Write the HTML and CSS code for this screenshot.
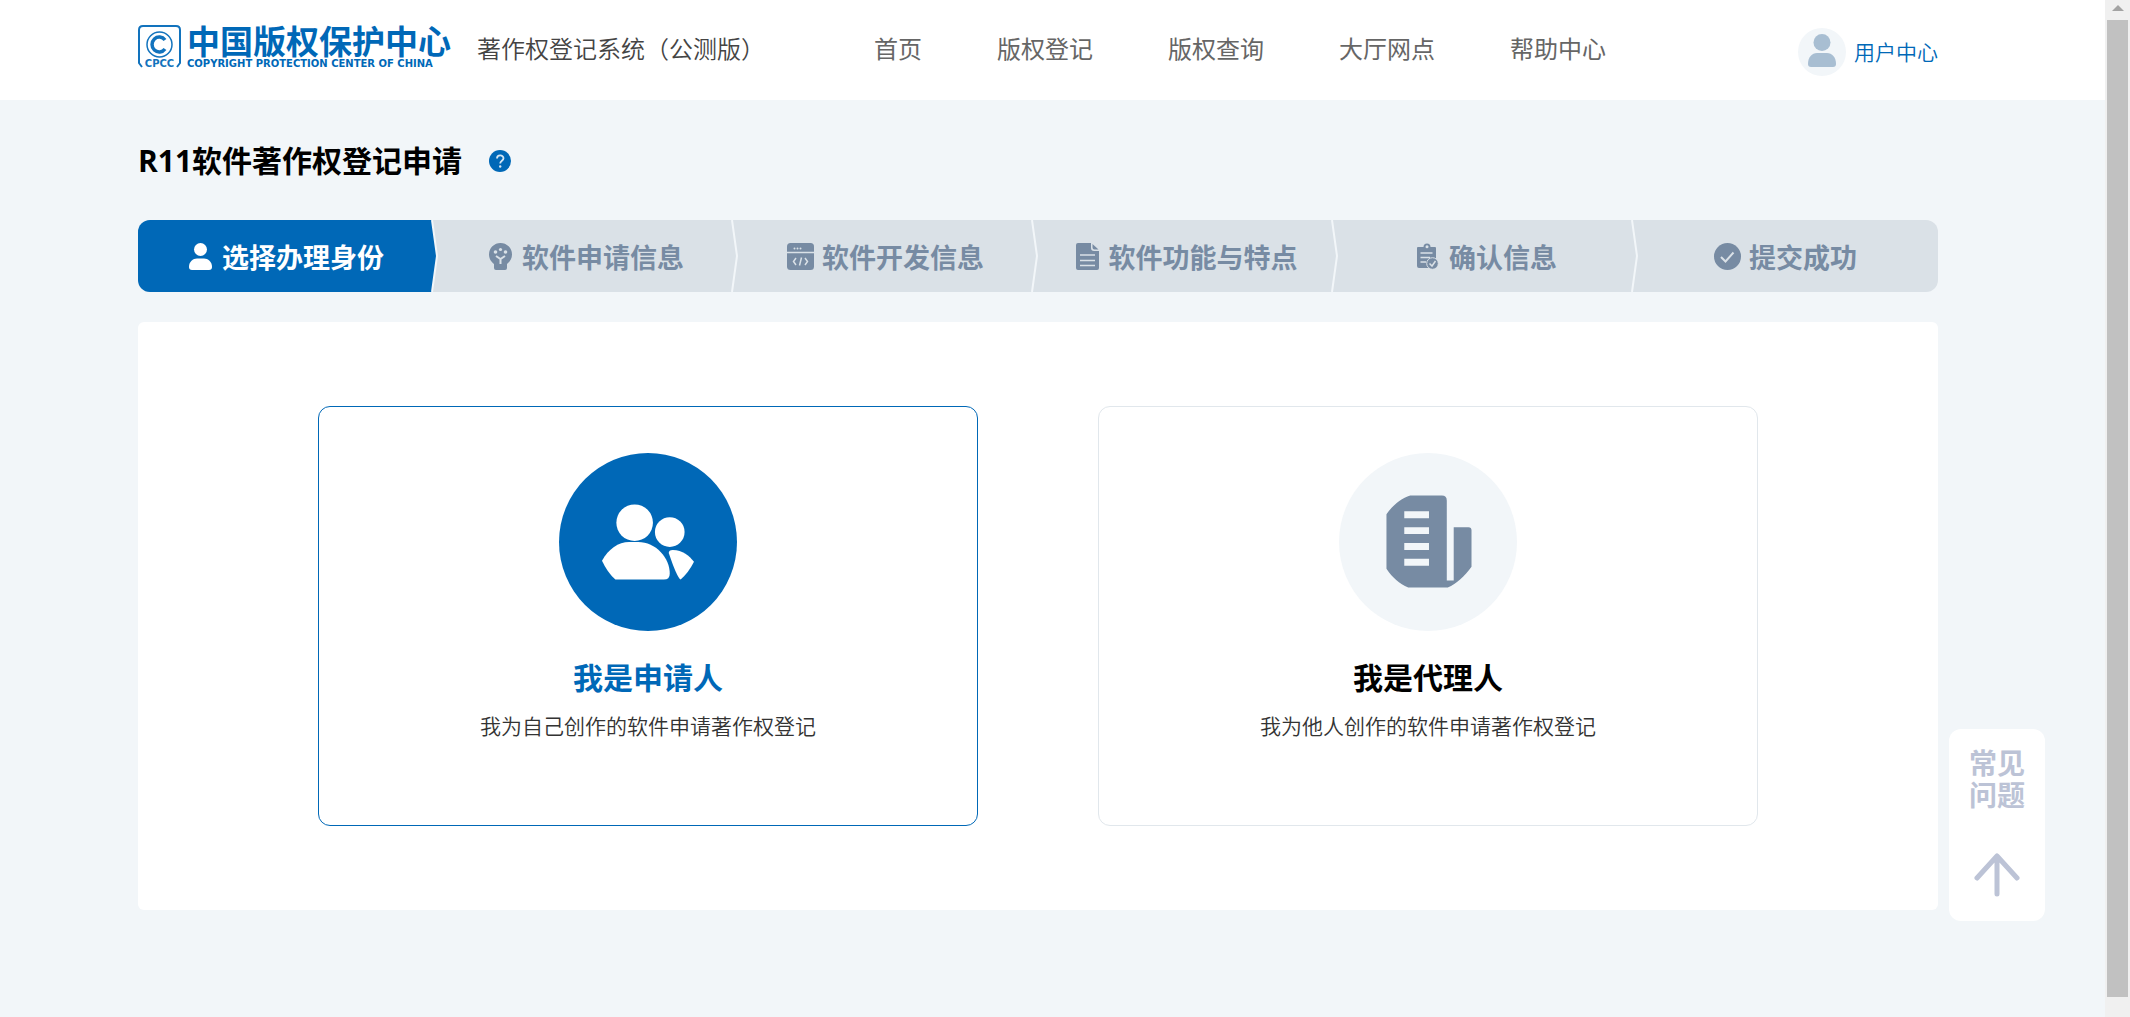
FILE: index.html
```html
<!DOCTYPE html>
<html lang="zh-CN">
<head>
<meta charset="utf-8">
<title>R11软件著作权登记申请</title>
<link rel="stylesheet" href="styles.css">
</head>
<body>
<div class="page">
  <header class="header">
    <div class="wrap header-row">
      <a class="logo" href="#" aria-label="中国版权保护中心">
        <svg class="logo-mark" viewBox="0 0 43 43" aria-hidden="true">
          <path d="M4 42 L1 38 V5 Q1 1 5 1 H38 Q42 1 42 5 V38 L39 42" fill="none" stroke="#1273bd" stroke-width="2"/>
          <circle cx="21.500" cy="19.500" r="12.500" fill="none" stroke="#1273bd" stroke-width="1.500"/>
          <path d="M27 15 A7.200 7.500 0 1 0 27 24" fill="none" stroke="#1273bd" stroke-width="3.500"/>
          <text class="logo-abbr" x="21.500" y="42" text-anchor="middle">CPCC</text>
        </svg>
        <span class="logo-text">
          <span class="logo-cn">中国版权保护中心</span>
          <span class="logo-en">COPYRIGHT PROTECTION CENTER OF CHINA</span>
        </span>
      </a>
      <span class="system-name">著作权登记系统（公测版）</span>
      <nav class="nav">
        <a href="#">首页</a>
        <a href="#">版权登记</a>
        <a href="#">版权查询</a>
        <a href="#">大厅网点</a>
        <a href="#">帮助中心</a>
      </nav>
      <a class="user" href="#">
        <svg class="avatar" viewBox="0 0 48 48" aria-hidden="true">
          <circle cx="24" cy="24" r="24" fill="#f2f6f9"/>
          <circle cx="24" cy="14.500" r="8.500" fill="#a8bed2"/>
          <path d="M10 36 C10 29 14 25 19 25 H29 C34 25 38 29 38 36 Q38 39 35 39 H13 Q10 39 10 36Z" fill="#a8bed2"/>
        </svg>
        用户中心
      </a>
    </div>
  </header>

  <main class="wrap">
    <div class="title-row">
      <h1>R11软件著作权登记申请</h1>
      <button class="help" type="button" aria-label="帮助">
        <svg viewBox="0 0 22 22" aria-hidden="true">
          <circle cx="11" cy="11" r="11" fill="#0068b7"/>
          <path d="M8 8.500 C8 4.500 14.500 4.500 14.500 8.300 C14.500 10.800 11.200 10.800 11.200 13.500" fill="none" stroke="#d5e6f3" stroke-width="1.800"/>
          <circle cx="11.200" cy="16.500" r="1.200" fill="#d5e6f3"/>
        </svg>
      </button>
    </div>

    <ol class="steps">
      <li class="step active">
        <svg class="step-icon" viewBox="0 0 27 27" aria-hidden="true">
          <circle cx="13.500" cy="6.500" r="6.500"/>
          <path d="M2 24 C2 18.500 6 15.500 10 15.500 H17 C21 15.500 25 18.500 25 24 Q25 27 22 27 H5 Q2 27 2 24Z"/>
        </svg>
        选择办理身份
        <svg class="arrow" viewBox="0 0 8 72" aria-hidden="true"><path class="tip" d="M0 0 H1 L6 36 L1 72 H0Z"/><path class="edge" d="M1 0 L6 36 L1 72"/></svg>
      </li>
      <li class="step">
        <svg class="step-icon" viewBox="0 0 27 27" aria-hidden="true">
          <path d="M13.500 0 A11.500 11.500 0 0 1 25 11.500 C25 16 22.500 19 20 21 V25 Q20 27 18 27 H9 Q7 27 7 25 V21 C4.500 19 2 16 2 11.500 A11.500 11.500 0 0 1 13.500 0Z"/>
          <g class="hole"><circle cx="13.500" cy="6.500" r="1.600"/><circle cx="8.500" cy="9" r="1.800"/><circle cx="18.500" cy="9" r="1.800"/></g>
          <path class="line" d="M9 13 L13.500 16 L18 13 M13.500 16 V21"/>
        </svg>
        软件申请信息
        <svg class="arrow" viewBox="0 0 8 72" aria-hidden="true"><path class="edge" d="M1 0 L6 36 L1 72"/></svg>
      </li>
      <li class="step">
        <svg class="step-icon" viewBox="0 0 27 27" aria-hidden="true">
          <rect width="27" height="27" rx="3.500"/>
          <path class="line thin" d="M0 9.500 H27 M9 15 L6.500 18.500 L9 22 M18 15 L20.500 18.500 L18 22 M14.500 14.500 L12.500 22.500"/>
          <g class="hole"><circle cx="7.500" cy="5.500" r="1"/><circle cx="10.500" cy="5.500" r="1"/><circle cx="13.500" cy="5.500" r="1"/></g>
        </svg>
        软件开发信息
        <svg class="arrow" viewBox="0 0 8 72" aria-hidden="true"><path class="edge" d="M1 0 L6 36 L1 72"/></svg>
      </li>
      <li class="step">
        <svg class="step-icon" viewBox="0 0 27 27" aria-hidden="true">
          <path d="M4 0 H17 V5 Q17 8 20 8 H25 V25 Q25 27 23 27 H4 Q2 27 2 25 V2 Q2 0 4 0Z M18.500 1 L24.500 6.500 H20.500 Q18.500 6.500 18.500 4.500Z"/>
          <path class="line thin" d="M6 12 H21 M6 17.500 H21 M6 22.500 H21"/>
        </svg>
        软件功能与特点
        <svg class="arrow" viewBox="0 0 8 72" aria-hidden="true"><path class="edge" d="M1 0 L6 36 L1 72"/></svg>
      </li>
      <li class="step">
        <svg class="step-icon" viewBox="0 0 27 27" aria-hidden="true">
          <path d="M4 4 H9.500 A3.500 3.500 0 0 1 16.500 4 H21 Q22 4 22 5 V25 H5 Q3 25 3 23 V5 Q3 4 4 4Z"/>
          <circle class="hole" cx="13" cy="3.800" r="1.500"/>
          <path class="line thin" d="M6.500 10 H18.500 M6.500 14.500 H16 M6.500 19 H12"/>
          <circle class="ring" cx="18.500" cy="20.500" r="5.800"/>
          <path class="line thin" d="M15.500 20.500 L18 23 L21.500 18"/>
        </svg>
        确认信息
        <svg class="arrow" viewBox="0 0 8 72" aria-hidden="true"><path class="edge" d="M1 0 L6 36 L1 72"/></svg>
      </li>
      <li class="step">
        <svg class="step-icon" viewBox="0 0 27 27" aria-hidden="true">
          <circle cx="13.500" cy="13.500" r="13.500"/>
          <path class="line" d="M7 14 L11.500 18.500 L19.500 9.500"/>
        </svg>
        提交成功
      </li>
    </ol>

    <section class="panel">
      <button class="card selected" type="button">
        <svg class="card-icon" viewBox="0 0 180 180" aria-hidden="true">
          <circle cx="90" cy="90" r="90" fill="#0068b7"/>
          <g fill="#fff">
            <circle cx="76.500" cy="70.500" r="18.500"/>
            <circle cx="112" cy="80" r="15"/>
            <path d="M43.500 109 C50 97 60 90 71 90 H80 C98 90 112 106 112 122 Q112 128 106 128 H57 Q49 121 43.500 109Z"/>
            <path d="M111 101 Q111 98 115 98 C125 98 132 104 136.500 110 Q131 121 123 128 Q119 125 111 101Z"/>
          </g>
        </svg>
        <span class="card-title">我是申请人</span>
        <span class="card-desc">我为自己创作的软件申请著作权登记</span>
      </button>
      <button class="card" type="button">
        <svg class="card-icon" viewBox="0 0 180 180" aria-hidden="true">
          <circle cx="90" cy="90" r="90" fill="#f2f6f9"/>
          <path fill="#778ba3" fill-rule="evenodd" d="M72 43 H104 Q109 43 109 48 V129 H116 V75 H131 Q134 75 134 78 V115 C127 125 119 132 110 136 H70 C61 132 54 126 48 117 V62 C54 53 63 46 72 43Z M66 59 V66 H91 V59Z M66 75 V82 H91 V75Z M66 91 V98 H91 V91Z M66 107 V114 H91 V107Z"/>
        </svg>
        <span class="card-title">我是代理人</span>
        <span class="card-desc">我为他人创作的软件申请著作权登记</span>
      </button>
    </section>
  </main>

  <aside class="float">
    <a class="faq" href="#">常见<br>问题</a>
    <button class="to-top" type="button" aria-label="返回顶部">
      <svg viewBox="0 0 46 46" aria-hidden="true"><path d="M3 26 L23 4 L43 26 M23 4 V42" fill="none" stroke="#bcc3d6" stroke-width="5" stroke-linecap="round" stroke-linejoin="round"/></svg>
    </button>
  </aside>
</div>
<div class="scrollbar" aria-hidden="true">
  <span class="scroll-up"></span>
  <span class="scroll-thumb"></span>
</div>
</body>
</html>
```

FILE: styles.css
```css
* { box-sizing: border-box; }

body {
  margin: 0;
  display: flex;
  min-height: 100vh;
  background: #f2f6f9;
  color: #333;
  font-family: "Open Sans", "Noto Sans CJK SC", sans-serif;
}

a { color: inherit; text-decoration: none; }

button {
  margin: 0;
  padding: 0;
  border: 0;
  background: none;
  font: inherit;
  color: inherit;
  cursor: pointer;
}

svg { display: block; flex: none; }

.page { flex: 1; min-width: 0; }

.wrap { padding: 0 167px 0 138px; }

/* Header */
.header { background: #fff; }

.header-row {
  display: flex;
  align-items: center;
  height: 100px;
  padding-bottom: 2px;
}

.logo {
  display: flex;
  gap: 6px;
  width: 310px;
  color: #0068b7;
}

.logo-mark { width: 43px; height: 43px; }

.logo-abbr {
  fill: #1273bd;
  font: bold 10px "DejaVu Sans", sans-serif;
}

.logo-text { display: flex; flex-direction: column; white-space: nowrap; }

.logo-cn {
  font: 700 33px/30px "Noto Sans CJK SC", sans-serif;
}

.logo-en {
  font: bold 10px/18px "DejaVu Sans", sans-serif;
}

.system-name {
  margin-left: 29px;
  color: #444;
  font-size: 24px;
  font-weight: 350;
  line-height: 36px;
  white-space: nowrap;
}

.nav {
  display: flex;
  gap: 75px;
  margin-left: 109px;
  color: #666;
  font-size: 24px;
  line-height: 36px;
  white-space: nowrap;
}

.user {
  display: flex;
  align-items: center;
  gap: 8px;
  margin-left: auto;
  color: #0068b7;
  font-size: 21px;
  font-weight: 350;
  line-height: 32px;
  padding-top: 6px;
  white-space: nowrap;
}

.avatar { width: 48px; height: 48px; }

/* Title */
.title-row {
  display: flex;
  align-items: center;
  gap: 27px;
  height: 120px;
  padding-top: 2px;
}

h1 {
  margin: 0;
  color: #000;
  font-size: 30px;
  font-weight: 700;
  line-height: 44px;
}

.help { width: 22px; height: 22px; }

/* Steps */
.steps {
  display: flex;
  margin: 0;
  padding: 0;
  list-style: none;
  border-radius: 12px;
  background: #dae1e7;
  overflow: hidden;
}

.step {
  position: relative;
  flex: 1;
  display: flex;
  align-items: center;
  justify-content: center;
  gap: 8px;
  height: 72px;
  padding-right: 5px;
  color: #778ba3;
  font-size: 27px;
  font-weight: 700;
  white-space: nowrap;
}

.step.active {
  color: #fff;
  background: linear-gradient(to right, #0068b7 calc(100% - 6px), transparent 0);
}

.step-icon { width: 27px; height: 27px; fill: currentColor; }
.step-icon .hole { fill: #dae1e7; }
.step-icon .line { fill: none; stroke: #dae1e7; stroke-width: 2; }
.step-icon .thin { stroke-width: 1.5; }
.step-icon .ring { stroke: #dae1e7; }

.arrow {
  position: absolute;
  top: 0;
  right: -1px;
  width: 8px;
  height: 72px;
}

.arrow .tip { fill: #0068b7; }
.arrow .edge { fill: none; stroke: #f2f6f9; stroke-width: 2; }

/* Identity panel */
.panel {
  display: grid;
  grid-template-columns: 1fr 1fr;
  gap: 120px;
  margin-top: 30px;
  padding: 84px 180px;
  border-radius: 6px;
  background: #fff;
}

.card {
  display: flex;
  flex-direction: column;
  align-items: center;
  height: 420px;
  padding-top: 46px;
  border: 1px solid #e1e7ec;
  border-radius: 12px;
}

.card.selected { border-color: #0068b7; }

.card-icon { width: 178px; height: 178px; }

.card-title {
  margin-top: 25px;
  color: #000;
  font-size: 30px;
  font-weight: 700;
  line-height: 44px;
}

.selected .card-title { color: #0068b7; }

.card-desc {
  margin-top: 10px;
  font-size: 21px;
  font-weight: 350;
  line-height: 32px;
}

/* Floating tools */
.float {
  position: fixed;
  right: 85px;
  bottom: 96px;
  display: flex;
  flex-direction: column;
  align-items: center;
  gap: 41px;
  width: 96px;
  height: 192px;
  padding-top: 18px;
  border-radius: 12px;
  background: #fff;
  color: #bcc3d6;
}

.faq {
  font-size: 28px;
  font-weight: 700;
  line-height: 32px;
}

.to-top svg { width: 46px; height: 46px; }

/* Scroll track */
.scrollbar {
  display: flex;
  flex-direction: column;
  align-items: center;
  width: 25px;
  height: 100vh;
  padding-bottom: 20px;
  background: #f0f0f0;
}

.scroll-up {
  width: 12px;
  height: 6px;
  margin: 5px 0 9px;
  border: 6px solid transparent;
  border-top-width: 0;
  border-bottom-color: #a3a3a3;
}

.scroll-thumb { flex: 1; width: 21px; background: #c1c1c1; }
```
